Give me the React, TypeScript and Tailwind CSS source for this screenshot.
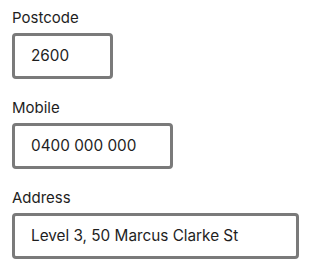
import React from "react";

function Field({ label, value, width }: { label: string; value: string; width: string }) {
  return (
    <div className="flex flex-col">
      <label className="text-[15px] leading-[20px] text-[#1e1e1e] mb-[5px]">{label}</label>
      <div
        className={`${width} h-[46px] border-[3px] border-[#7a7a7a] rounded-[4px] bg-white flex items-center pl-[16px] text-[15.3px] text-[#1e1e1e]`}
      >
        {value}
      </div>
    </div>
  );
}

export default function App() {
  return (
    <div
      className="w-[311px] h-[267px] bg-white pt-[8px] pl-[12px] flex flex-col gap-[19px]"
      style={{ fontFamily: "Inter, 'Noto Sans', sans-serif" }}
    >
      <Field label="Postcode" value="2600" width="w-[101px]" />
      <Field label="Mobile" value="0400 000 000" width="w-[161px]" />
      <Field label="Address" value="Level 3, 50 Marcus Clarke St" width="w-[287px]" />
    </div>
  );
}
